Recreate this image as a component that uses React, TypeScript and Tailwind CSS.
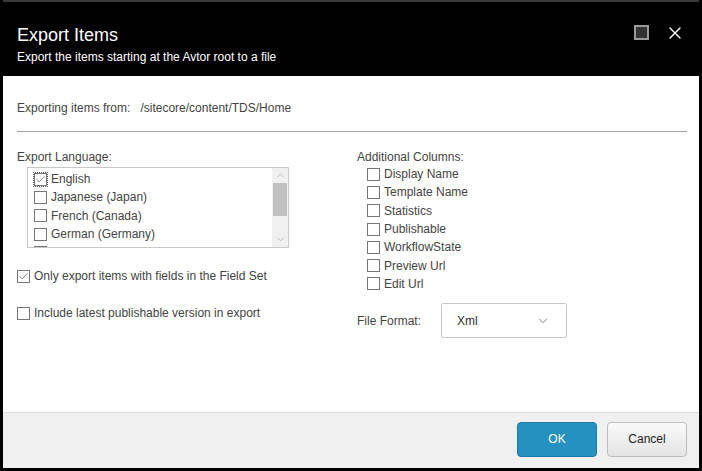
import { X, ChevronDown, ChevronUp, Check } from "lucide-react"

const languages = ["English", "Japanese (Japan)", "French (Canada)", "German (Germany)", ""]
const columns = ["Display Name", "Template Name", "Statistics", "Publishable", "WorkflowState", "Preview Url", "Edit Url"]

function Box({ checked, dotted }: { checked?: boolean; dotted?: boolean }) {
  return (
    <span className="relative flex h-[13px] w-[13px] shrink-0 items-center justify-center border border-[#777] bg-white">
      {checked && <Check className="h-[11px] w-[11px] text-[#444]" strokeWidth={1.5} />}
      {dotted && <span className="absolute -inset-[2px] border border-dotted border-[#555]" />}
    </span>
  )
}

export default function App() {
  return (
    <div className="w-[702px] h-[471px] bg-black px-[3px] pb-[3px] text-[#444] text-[12px]" style={{ fontFamily: '"Liberation Sans", Arial, sans-serif' }}>
      <div className="flex h-full flex-col">
        <div className="relative h-[76px] shrink-0 border-t-2 border-[#3a3a3a] bg-black px-[14px] pt-[22px]">
          <div className="text-[18px] leading-[22px] text-white">Export Items</div>
          <div className="mt-[4px] text-[12px] leading-[14px] text-white">Export the items starting at the Avtor root to a file</div>
          <div className="absolute right-[50px] top-[23px] h-[15px] w-[15px] border-2 border-[#9a9a9a] bg-[#333]" />
          <X className="absolute right-[14px] top-[21px] h-[20px] w-[20px] text-white" strokeWidth={1.6} />
        </div>

        <div className="flex-1 bg-white px-[14px] pt-[25px]">
          <div className="flex gap-[10px] leading-[14px]">
            <span>Exporting items from:</span>
            <span>/sitecore/content/TDS/Home</span>
          </div>
          <div className="mt-[16px] h-px w-[670px] bg-[#a0a0a0]" />

          <div className="mt-[18px] flex">
            <div className="w-[340px]">
              <div className="leading-[14px]">Export Language:</div>
              <div className="ml-[10px] mt-[3px] flex h-[81px] w-[262px] border border-[#c8c8c8]">
                <div className="flex-1 overflow-hidden pl-[6px] pt-[2px]">
                  {languages.map((l, i) => (
                    <div key={i} className="flex h-[18.3px] items-center gap-[4px]">
                      <Box checked={i === 0} dotted={i === 0} />
                      {l && <span>{l}</span>}
                    </div>
                  ))}
                </div>
                <div className="flex w-[16px] flex-col bg-[#f0f0f0]">
                  <ChevronUp className="mx-auto mt-[2px] h-[11px] w-[11px] text-[#a0a0a0]" strokeWidth={1.5} />
                  <div className="mx-[1px] mt-[2px] h-[33px] bg-[#c1c1c1]" />
                  <div className="flex-1" />
                  <ChevronDown className="mx-auto mb-[2px] h-[11px] w-[11px] text-[#a0a0a0]" strokeWidth={1.5} />
                </div>
              </div>

              <div className="mt-[19px] flex items-center gap-[4px]">
                <Box checked />
                <span>Only export items with fields in the Field Set</span>
              </div>
              <div className="mt-[19px] flex items-center gap-[4px]">
                <Box />
                <span>Include latest publishable version in export</span>
              </div>
            </div>

            <div className="flex-1">
              <div className="leading-[14px]">Additional Columns:</div>
              <div className="ml-[10px] mt-[1px]">
                {columns.map((c) => (
                  <div key={c} className="flex h-[18.3px] items-center gap-[4px]">
                    <Box />
                    <span>{c}</span>
                  </div>
                ))}
              </div>
              <div className="mt-[10px] flex items-center">
                <span className="w-[84px]">File Format:</span>
                <div className="flex h-[35px] w-[126px] items-center justify-between rounded-[2px] border border-[#c8c8c8] pl-[15px] pr-[16px] text-[#333]">
                  <span>Xml</span>
                  <ChevronDown className="h-[14px] w-[14px] text-[#555]" strokeWidth={1.3} />
                </div>
              </div>
            </div>
          </div>
        </div>

        <div className="flex h-[56px] shrink-0 items-center justify-end gap-[10px] border-t border-[#dcdcdc] bg-[#f0f0f0] pr-[12px] pb-[3px]">
          <button className="h-[35px] w-[80px] rounded-[4px] border border-[#1b7aa6] bg-[#2491c1] text-[12px] text-white">OK</button>
          <button className="h-[35px] w-[80px] rounded-[4px] border border-[#bdbdbd] bg-gradient-to-b from-[#fafafa] to-[#e4e4e4] text-[12px] text-[#222]">Cancel</button>
        </div>
      </div>
    </div>
  )
}
